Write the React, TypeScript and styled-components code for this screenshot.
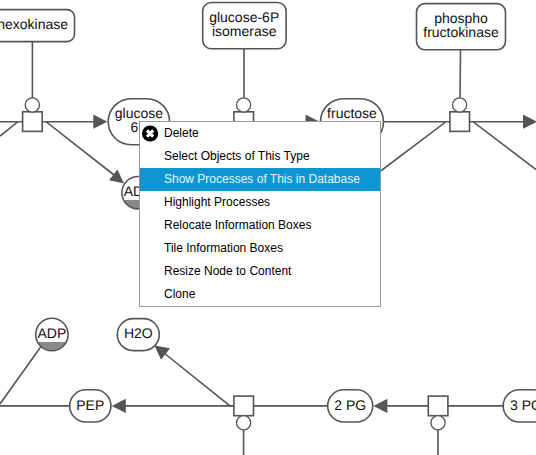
import React from "react";
import styled, { createGlobalStyle } from "styled-components";

const GlobalStyle = createGlobalStyle`
  body {
    margin: 0;
    background: #fff;
    overflow: hidden;
    font-family: "Liberation Sans", Arial, sans-serif;
  }
`;

const Canvas = styled.main`
  position: relative;
  width: 536px;
  height: 455px;
  overflow: hidden;
  background: #fff;
`;

const Diagram = styled.svg`
  display: block;
  fill: #fff;
  stroke: #555;
  stroke-width: 1.6;
`;

const Label = styled.text`
  fill: #111;
  stroke: none;
  font-size: 14px;
  text-anchor: middle;
  text-rendering: geometricPrecision;
`;

const Arrow = styled.polygon`
  fill: #555;
  stroke: none;
`;

const Menu = styled.ul`
  position: absolute;
  left: 139px;
  top: 121px;
  box-sizing: border-box;
  width: 242px;
  margin: 0;
  padding: 0;
  list-style: none;
  background: #fff;
  border: 1px solid #999;
`;

const MenuItem = styled.li<{ $active?: boolean }>`
  display: grid;
  grid-template-columns: 24px 1fr;
  align-items: center;
  height: 23px;
  font-size: 12px;
  line-height: 23px;
  white-space: nowrap;
  color: ${(p) => (p.$active ? "#e6f4fb" : "#000")};
  background: ${(p) => (p.$active ? "#0f96d2" : "transparent")};
`;

const IconSlot = styled.span`
  display: flex;
  padding-left: 2px;
`;

type Box = { x: number; y: number; w: number; h: number; r: number; lines: [string, number, number][] };

const boxes: Box[] = [
  { x: -30, y: 9.6, w: 104.5, h: 32, r: 7.5, lines: [["hexokinase", 32.6, 29]] },
  { x: 202.7, y: 2.5, w: 83.4, h: 46.2, r: 8.5, lines: [["glucose-6P", 244.2, 22], ["isomerase", 244.2, 36]] },
  { x: 416.5, y: 3.6, w: 89, h: 46.2, r: 8.5, lines: [["phospho", 461, 23], ["fructokinase", 461, 37]] },
  { x: 108.2, y: 98.7, w: 61.4, h: 46, r: 23, lines: [["glucose", 138.9, 118], ["6P", 139.1, 132]] },
  { x: 320.5, y: 98.7, w: 63, h: 46, r: 23, lines: [["fructose", 352, 118], ["6P", 352, 132]] },
  { x: 117.3, y: 318.6, w: 42, h: 32, r: 16, lines: [["H2O", 138.3, 338]] },
  { x: 69.7, y: 389.8, w: 41.2, h: 32.2, r: 16.1, lines: [["PEP", 90.3, 410]] },
  { x: 327.7, y: 389.8, w: 45, h: 32.2, r: 16.1, lines: [["2 PG", 350.2, 410]] },
  { x: 503.2, y: 389.8, w: 46, h: 32.2, r: 16.1, lines: [["3 PG", 526, 410]] },
];

const NodeBox = ({ x, y, w, h, r, lines }: Box) => (
  <g>
    <rect x={x} y={y} width={w} height={h} rx={r} />
    {lines.map(([text, tx, ty]) => (
      <Label key={text} x={tx} y={ty}>{text}</Label>
    ))}
  </g>
);

const Reaction = ({ x, y, portY }: { x: number; y: number; portY: number }) => (
  <g>
    <rect x={x - 9.7} y={y - 9.8} width={19.6} height={19.6} />
    <circle cx={x} cy={portY} r={7.1} strokeWidth={1.3} />
  </g>
);

const Adp = ({ x, y }: { x: number; y: number }) => (
  <g>
    <circle cx={x} cy={y} r={16.2} stroke="none" />
    <path d={`M${x - 14} ${y + 7.4}H${x + 14}A16 16 0 0 1 ${x - 14} ${y + 7.4}Z`} fill="#888" stroke="none" />
    <circle cx={x} cy={y} r={16.2} fill="none" />
    <Label x={x} y={y + 3.7}>ADP</Label>
  </g>
);

const menuItems = [
  "Delete",
  "Select Objects of This Type",
  "Show Processes of This in Database",
  "Highlight Processes",
  "Relocate Information Boxes",
  "Tile Information Boxes",
  "Resize Node to Content",
  "Clone",
];

const DeleteIcon = () => (
  <svg width="17" height="17" viewBox="0 0 17 17">
    <circle cx="8.1" cy="8.5" r="8.1" fill="#000" />
    <path d="M5 5.4L11.2 11.6M11.2 5.4L5 11.6" stroke="#fff" strokeWidth="3.1" />
  </svg>
);

export default function App() {
  return (
    <>
      <GlobalStyle />
      <Canvas>
        <Diagram width="536" height="455" viewBox="0 0 536 455">
          <g fill="none">
            <path d="M0 121.7H95M42 121.7H46L116 176.5M22 121.7H18L0 136" />
            <path d="M32.4 42V98M244 49V98M460.5 50L460 98" />
            <path d="M170 121.7H225M262 121.7H308M384 121.7H526M469 121.7H473L536 169.5M450 121.7H446L380 171.5" />
            <path d="M41 346.5L0 404M0 405.9H70M124 405.9H328M386 405.9H504" />
            <path d="M234 405.9H230L164 353M243.6 430V455M438 430V455" />
          </g>
          <Arrow points="93.3,114.6 107.3,121.7 93.3,128.8" />
          <Arrow points="305.5,114.6 319.5,121.7 305.5,128.8" />
          <Arrow points="523,114.6 537,121.7 523,128.8" />
          <Arrow points="124,183.4 117.4,169.4 109,180.3" />
          <Arrow points="154.5,345.6 170,348.3 161,359.7" />
          <Arrow points="111.8,405.9 125.8,398.8 125.8,413" />
          <Arrow points="373.4,405.9 387.4,398.8 387.4,413" />
          {boxes.map((box) => (
            <NodeBox key={box.lines[0][0] + box.x} {...box} />
          ))}
          <Adp x={51.9} y={334.5} />
          <Adp x={138.1} y={192.7} />
          <Reaction x={32.3} y={121.6} portY={105} />
          <Reaction x={243.6} y={121.6} portY={105} />
          <Reaction x={459.6} y={121.6} portY={105} />
          <Reaction x={243.6} y={405.9} portY={422.7} />
          <Reaction x={438} y={405.9} portY={422.7} />
        </Diagram>
        <Menu>
          {menuItems.map((item, i) => (
            <MenuItem key={item} $active={i === 2}>
              <IconSlot>{i === 0 && <DeleteIcon />}</IconSlot>
              <span>{item}</span>
            </MenuItem>
          ))}
        </Menu>
      </Canvas>
    </>
  );
}
